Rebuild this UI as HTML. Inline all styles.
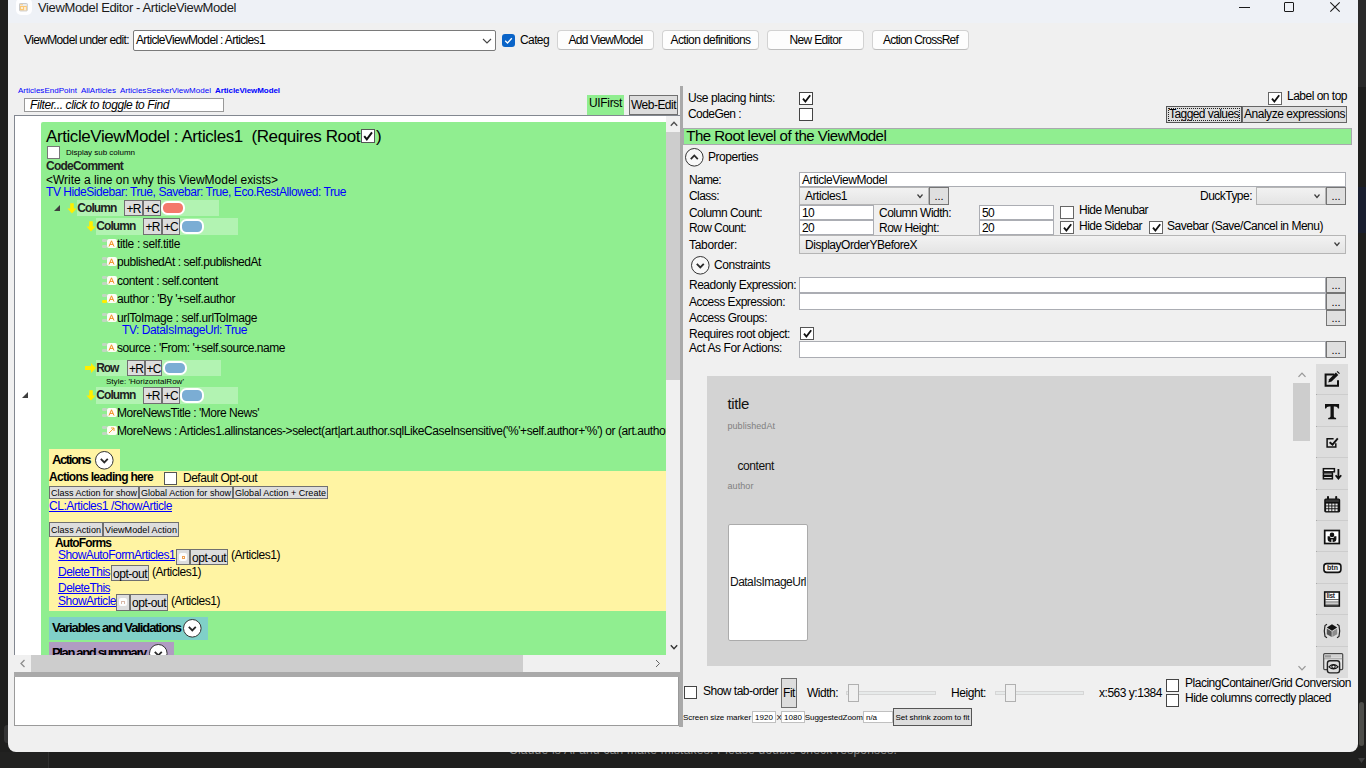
<!DOCTYPE html>
<html><head><meta charset="utf-8"><title>ViewModel Editor - ArticleViewModel</title>
<style>
html,body{margin:0;padding:0;width:1366px;height:768px;overflow:hidden;background:#1c1c1c;font-family:"Liberation Sans",sans-serif;}
.b{position:absolute;box-sizing:border-box;}
.t{position:absolute;white-space:pre;}
svg{position:absolute;overflow:visible;}
</style></head><body>
<div class="b" style="left:0px;top:0px;width:1366px;height:768px;background:#1f1f1e;"></div>
<span class="t" style="left:509px;top:740.0px;line-height:20px;color:#8a8a8a;font-size:12px;letter-spacing:0.219px;">Claude is AI and can make mistakes. Please double-check responses.</span>
<div class="b" style="left:1358px;top:0px;width:8px;height:87px;background:#2a2a2a;"></div>
<div class="b" style="left:1358px;top:187px;width:8px;height:46px;background:#1a1f30;"></div>
<div class="b" style="left:1358.7px;top:702px;width:5.2px;height:44px;background:#4e4e4a;border-radius:3px;"></div>
<svg style="left:1358px;top:758px" width="7" height="5" viewBox="0 0 7 5"><path d="M0 0 H7 L3.5 5 Z" fill="#3e3e3e"/></svg>
<div class="b" style="left:0px;top:752px;width:48px;height:16px;background:#222221;"></div>
<div class="b" style="left:48px;top:752px;width:1px;height:16px;background:#303030;"></div>
<div class="b" style="left:4px;top:725px;width:7px;height:18px;background:#353535;border-radius:3.5px;"></div>
<div class="b" style="left:8px;top:-10px;width:1350px;height:761.5px;background:#f0f0f0;border-radius:8px;"></div>
<div class="b" style="left:8px;top:0px;width:1350px;height:23px;background:#eef1f6;"></div>
<div class="b" style="left:15.8px;top:-2px;width:16px;height:17px;background:#fefeff;border-radius:5px;"></div>
<svg style="left:19.4px;top:2.6px" width="8.8" height="8.4" viewBox="0 0 8.8 8.4"><rect x="0.5" y="0.5" width="7.8" height="7.4" rx="0.6" fill="#ececec" stroke="#c9c9c9" stroke-width="1"/><rect x="1" y="1" width="3" height="1.2" fill="#fbd59a"/><rect x="1" y="3" width="6.8" height="4.3" fill="#fbc774"/><circle cx="3" cy="5" r="0.9" fill="#fff"/><rect x="5.2" y="4" width="1.6" height="3.2" fill="#fff" opacity="0.8"/></svg>
<span class="t" style="left:38px;top:-2.5px;line-height:20px;color:#1a1a1a;font-size:13px;letter-spacing:-0.378px;">ViewModel Editor - ArticleViewModel</span>
<div class="b" style="left:1239px;top:7px;width:11px;height:1px;background:#1a1a1a;"></div>
<div class="b" style="left:1284px;top:2px;width:10px;height:10px;border:1px solid #1a1a1a;border-radius:1px;"></div>
<svg style="left:1330px;top:2px" width="10" height="10" viewBox="0 0 10 10"><path d="M0.3 0.3 L9.7 9.7 M9.7 0.3 L0.3 9.7" stroke="#1a1a1a" stroke-width="1.1"/></svg>
<span class="t" style="left:24px;top:30.0px;line-height:20px;color:#000;font-size:12px;letter-spacing:-0.644px;">ViewModel under edit:</span>
<div class="b" style="left:133px;top:30px;width:363px;height:21px;background:#fff;border:1px solid #7a7a7a;border-radius:2px;"></div>
<span class="t" style="left:136px;top:30.0px;line-height:20px;color:#000;font-size:12px;letter-spacing:-0.649px;">ArticleViewModel : Articles1</span>
<svg style="left:479px;top:33px" width="16" height="16" viewBox="-8 -8 16 16"><path d="M-4.0 -2.0 L0 2.0 L4.0 -2.0" fill="none" stroke="#444" stroke-width="1.1"/></svg>
<div class="b" style="left:502px;top:34px;width:13px;height:13px;background:#0a64c8;border-radius:3px;"></div>
<svg style="left:502px;top:34px" width="13" height="13" viewBox="0 0 13 13"><path d="M3.2 6.8 L5.5 9 L9.8 4.2" fill="none" stroke="#fff" stroke-width="1.3"/></svg>
<span class="t" style="left:520px;top:30.0px;line-height:20px;color:#000;font-size:12px;letter-spacing:-0.606px;">Categ</span>
<div class="b" style="left:557px;top:30px;width:97px;height:20px;background:#fdfdfd;border:1px solid #d2d2d2;border-radius:4px;border-bottom-color:#bdbdbd;"></div>
<span class="t" style="left:568.5px;top:30.0px;line-height:20px;color:#000;font-size:12px;letter-spacing:-0.706px;">Add ViewModel</span>
<div class="b" style="left:662px;top:30px;width:97px;height:20px;background:#fdfdfd;border:1px solid #d2d2d2;border-radius:4px;border-bottom-color:#bdbdbd;"></div>
<span class="t" style="left:670.5px;top:30.0px;line-height:20px;color:#000;font-size:12px;letter-spacing:-0.596px;">Action definitions</span>
<div class="b" style="left:767px;top:30px;width:97px;height:20px;background:#fdfdfd;border:1px solid #d2d2d2;border-radius:4px;border-bottom-color:#bdbdbd;"></div>
<span class="t" style="left:789.5px;top:30.0px;line-height:20px;color:#000;font-size:12px;letter-spacing:-0.669px;">New Editor</span>
<div class="b" style="left:872px;top:30px;width:97px;height:20px;background:#fdfdfd;border:1px solid #d2d2d2;border-radius:4px;border-bottom-color:#bdbdbd;"></div>
<span class="t" style="left:883.0px;top:30.0px;line-height:20px;color:#000;font-size:12px;letter-spacing:-0.780px;">Action CrossRef</span>
<span class="t" style="left:18px;top:80.7px;line-height:20px;color:#0000ff;font-size:8px;letter-spacing:0.019px;">ArticlesEndPoint</span>
<span class="t" style="left:81px;top:80.7px;line-height:20px;color:#0000ff;font-size:8px;letter-spacing:-0.011px;">AllArticles</span>
<span class="t" style="left:120px;top:80.7px;line-height:20px;color:#0000ff;font-size:8px;letter-spacing:0.019px;">ArticlesSeekerViewModel</span>
<span class="t" style="left:215px;top:80.7px;line-height:20px;color:#0000ff;font-size:8px;font-weight:bold;letter-spacing:-0.068px;">ArticleViewModel</span>
<div class="b" style="left:24px;top:98px;width:200px;height:14px;background:#fff;border:1px solid #999;"></div>
<span class="t" style="left:30px;top:95.3px;line-height:20px;color:#000;font-size:12px;font-style:italic;letter-spacing:-0.402px;">Filter... click to toggle to Find</span>
<div class="b" style="left:587px;top:95px;width:37px;height:20px;background:#90ee90;"></div>
<span class="t" style="left:589px;top:93.0px;line-height:20px;color:#000;font-size:12px;letter-spacing:-0.333px;">UIFirst</span>
<div class="b" style="left:629px;top:95px;width:49px;height:20px;background:#dddddd;border:1px solid #707070;"></div>
<span class="t" style="left:631px;top:95.0px;line-height:20px;color:#000;font-size:12px;letter-spacing:-0.518px;">Web-Edit</span>
<div class="b" style="left:14px;top:115px;width:666px;height:558px;background:#fff;border:1px solid #828790;"></div>
<div class="b" style="left:41px;top:122px;width:625px;height:533px;background:#90ee90;border-radius:2px 0 0 0;"></div>
<div class="b" style="left:666px;top:116px;width:14px;height:540px;background:#f0f0f0;"></div>
<div class="b" style="left:666px;top:132px;width:14px;height:248px;background:#cdcdcd;"></div>
<svg style="left:666.3px;top:116px" width="16" height="16" viewBox="-8 -8 16 16"><path d="M-3.2 1.7 L0 -1.7 L3.2 1.7" fill="none" stroke="#505050" stroke-width="1.4"/></svg>
<svg style="left:666.3px;top:639px" width="16" height="16" viewBox="-8 -8 16 16"><path d="M-3.2 -1.7 L0 1.7 L3.2 -1.7" fill="none" stroke="#333" stroke-width="1.4"/></svg>
<div class="b" style="left:14px;top:655px;width:666px;height:17px;background:#f0f0f0;"></div>
<div class="b" style="left:31px;top:655px;width:492px;height:17px;background:#cdcdcd;"></div>
<svg style="left:15px;top:655px" width="16" height="17" viewBox="0 0 16 17"><path d="M9.5 5 L6 8.5 L9.5 12" fill="none" stroke="#8c8c8c" stroke-width="1.3"/></svg>
<svg style="left:650px;top:655px" width="16" height="17" viewBox="0 0 16 17"><path d="M6 5 L9.5 8.5 L6 12" fill="none" stroke="#666" stroke-width="1"/></svg>
<div class="b" style="left:14px;top:672px;width:669px;height:5px;background:#a9a9a9;"></div>
<div class="b" style="left:14px;top:677px;width:665px;height:49px;background:#fff;border:1px solid #9a9a9a;border-top:none;"></div>
<div class="b" style="left:679px;top:672px;width:4px;height:55px;background:#a9a9a9;"></div>
<div class="b" style="left:680px;top:86px;width:3px;height:641px;background:#a9a9a9;"></div>
<svg style="left:21px;top:391px" width="8" height="8" viewBox="0 0 8 8"><path d="M7 1 L7 7 L1 7 Z" fill="#3e3e3e"/></svg>
<div class="b" style="left:0;top:0;width:666px;height:655px;overflow:hidden">
<span class="t" style="left:46px;top:127.0px;line-height:20px;color:#000;font-size:17px;letter-spacing:-0.415px;">ArticleViewModel : Articles1  (Requires Root</span>
<div class="b" style="left:361px;top:129px;width:14px;height:14px;background:#fff;border:1px solid #555;"></div>
<svg style="left:361.0px;top:129px" width="14" height="14" viewBox="0 0 13 13"><path d="M3 6.6 L5.4 9.6 L10.2 3.2" fill="none" stroke="#111" stroke-width="1.8"/></svg>
<span class="t" style="left:376px;top:127.0px;line-height:20px;color:#000;font-size:17px;">)</span>
<div class="b" style="left:47px;top:146px;width:13px;height:13px;background:#fff;border:1px solid #777;"></div>
<span class="t" style="left:66px;top:142.5px;line-height:20px;color:#000;font-size:8px;letter-spacing:-0.021px;">Display sub column</span>
<span class="t" style="left:46px;top:156.0px;line-height:20px;color:#222;font-size:12px;font-weight:bold;letter-spacing:-0.759px;">CodeComment</span>
<span class="t" style="left:46px;top:170.0px;line-height:20px;color:#000;font-size:12px;letter-spacing:-0.023px;">&lt;Write a line on why this ViewModel exists&gt;</span>
<span class="t" style="left:46px;top:182.0px;line-height:20px;color:#0000ff;font-size:12px;letter-spacing:-0.440px;">TV HideSidebar: True, Savebar: True, Eco.RestAllowed: True</span>
<svg style="left:53px;top:204px" width="8" height="8" viewBox="0 0 8 8"><path d="M7 1 L7 7 L1 7 Z" fill="#3e3e3e"/></svg>
<div class="b" style="left:77px;top:200px;width:142px;height:16px;background:#b2f3b2;"></div>
<svg style="left:67px;top:202px" width="10" height="12" viewBox="0 0 10 12"><path d="M3.2 1.2 H6.8 V6.4 H9.6 L5 11.4 L0.4 6.4 H3.2 Z" fill="#ffee00"/></svg>
<span class="t" style="left:77.3px;top:198.0px;line-height:20px;color:#222;font-size:12px;font-weight:bold;letter-spacing:-0.945px;">Column</span>
<div class="b" style="left:124px;top:200px;width:19px;height:16px;background:#dddddd;border:1px solid #707070;"></div>
<span class="t" style="left:126.5px;top:198.5px;line-height:20px;color:#000;font-size:12px;letter-spacing:-0.844px;">+R</span>
<div class="b" style="left:142.5px;top:200px;width:18.5px;height:16px;background:#dddddd;border:1px solid #707070;"></div>
<span class="t" style="left:144.75px;top:198.5px;line-height:20px;color:#000;font-size:12px;letter-spacing:-0.844px;">+C</span>
<div class="b" style="left:161.2px;top:200.7px;width:24px;height:14.6px;background:#f4786c;border:2px solid #fff;border-radius:6.5px;"></div>
<div class="b" style="left:96px;top:218px;width:142px;height:17px;background:#b2f3b2;"></div>
<svg style="left:86px;top:220px" width="10" height="12" viewBox="0 0 10 12"><path d="M3.2 1.2 H6.8 V6.4 H9.6 L5 11.4 L0.4 6.4 H3.2 Z" fill="#ffee00"/></svg>
<span class="t" style="left:96.3px;top:216.0px;line-height:20px;color:#222;font-size:12px;font-weight:bold;letter-spacing:-0.945px;">Column</span>
<div class="b" style="left:143px;top:218px;width:19px;height:17px;background:#dddddd;border:1px solid #707070;"></div>
<span class="t" style="left:145.5px;top:217.0px;line-height:20px;color:#000;font-size:12px;letter-spacing:-0.844px;">+R</span>
<div class="b" style="left:161.5px;top:218px;width:18.5px;height:17px;background:#dddddd;border:1px solid #707070;"></div>
<span class="t" style="left:163.75px;top:217.0px;line-height:20px;color:#000;font-size:12px;letter-spacing:-0.844px;">+C</span>
<div class="b" style="left:180.2px;top:219.2px;width:24px;height:14.6px;background:#7badd4;border:2px solid #fff;border-radius:6.5px;"></div>
<div class="b" style="left:102px;top:239.2px;width:5px;height:2.6px;background:#c2d6c2;border-radius:1.3px;"></div>
<div class="b" style="left:102px;top:245px;width:5px;height:2.6px;background:#c2d6c2;border-radius:1.3px;"></div>
<div class="b" style="left:107px;top:238.6px;width:9.5px;height:9.4px;background:#fdfdf5;border-radius:2px;"></div>
<svg style="left:108px;top:239.6px" width="7" height="7" viewBox="0 0 7 7"><path d="M1 6.5 L3.5 0.8 L6 6.5 M2 4.4 H5" fill="none" stroke="#f09020" stroke-width="1"/></svg>
<span class="t" style="left:117px;top:234.0px;line-height:20px;color:#000;font-size:12px;letter-spacing:-0.353px;">title : self.title</span>
<div class="b" style="left:102px;top:257.2px;width:5px;height:2.6px;background:#c2d6c2;border-radius:1.3px;"></div>
<div class="b" style="left:102px;top:263px;width:5px;height:2.6px;background:#c2d6c2;border-radius:1.3px;"></div>
<div class="b" style="left:107px;top:256.6px;width:9.5px;height:9.4px;background:#fdfdf5;border-radius:2px;"></div>
<svg style="left:108px;top:257.6px" width="7" height="7" viewBox="0 0 7 7"><path d="M1 6.5 L3.5 0.8 L6 6.5 M2 4.4 H5" fill="none" stroke="#f09020" stroke-width="1"/></svg>
<span class="t" style="left:117px;top:252.0px;line-height:20px;color:#000;font-size:12px;letter-spacing:-0.448px;">publishedAt : self.publishedAt</span>
<div class="b" style="left:102px;top:276.2px;width:5px;height:2.6px;background:#c2d6c2;border-radius:1.3px;"></div>
<div class="b" style="left:102px;top:282px;width:5px;height:2.6px;background:#c2d6c2;border-radius:1.3px;"></div>
<div class="b" style="left:107px;top:275.6px;width:9.5px;height:9.4px;background:#fdfdf5;border-radius:2px;"></div>
<svg style="left:108px;top:276.6px" width="7" height="7" viewBox="0 0 7 7"><path d="M1 6.5 L3.5 0.8 L6 6.5 M2 4.4 H5" fill="none" stroke="#f09020" stroke-width="1"/></svg>
<span class="t" style="left:117px;top:271.0px;line-height:20px;color:#000;font-size:12px;letter-spacing:-0.443px;">content : self.content</span>
<div class="b" style="left:102px;top:294.2px;width:5px;height:2.6px;background:#c2d6c2;border-radius:1.3px;"></div>
<div class="b" style="left:102px;top:300px;width:5px;height:2.6px;background:#ffee00;border-radius:1.3px;"></div>
<div class="b" style="left:107px;top:293.6px;width:9.5px;height:9.4px;background:#fdfdf5;border-radius:2px;"></div>
<svg style="left:108px;top:294.6px" width="7" height="7" viewBox="0 0 7 7"><path d="M1 6.5 L3.5 0.8 L6 6.5 M2 4.4 H5" fill="none" stroke="#f09020" stroke-width="1"/></svg>
<span class="t" style="left:117px;top:289.0px;line-height:20px;color:#000;font-size:12px;letter-spacing:-0.423px;">author : &#x27;By &#x27;+self.author</span>
<div class="b" style="left:102px;top:313.2px;width:5px;height:2.6px;background:#c2d6c2;border-radius:1.3px;"></div>
<div class="b" style="left:102px;top:319px;width:5px;height:2.6px;background:#c2d6c2;border-radius:1.3px;"></div>
<div class="b" style="left:107px;top:312.6px;width:9.5px;height:9.4px;background:#fdfdf5;border-radius:2px;"></div>
<svg style="left:108px;top:313.6px" width="7" height="7" viewBox="0 0 7 7"><path d="M1 6.5 L3.5 0.8 L6 6.5 M2 4.4 H5" fill="none" stroke="#f09020" stroke-width="1"/></svg>
<span class="t" style="left:117px;top:308.0px;line-height:20px;color:#000;font-size:12px;letter-spacing:-0.383px;">urlToImage : self.urlToImage</span>
<span class="t" style="left:122px;top:320.0px;line-height:20px;color:#0000ff;font-size:12px;letter-spacing:-0.442px;">TV: DataIsImageUrl: True</span>
<div class="b" style="left:102px;top:343.2px;width:5px;height:2.6px;background:#c2d6c2;border-radius:1.3px;"></div>
<div class="b" style="left:102px;top:349px;width:5px;height:2.6px;background:#c2d6c2;border-radius:1.3px;"></div>
<div class="b" style="left:107px;top:342.6px;width:9.5px;height:9.4px;background:#fdfdf5;border-radius:2px;"></div>
<svg style="left:108px;top:343.6px" width="7" height="7" viewBox="0 0 7 7"><path d="M1 6.5 L3.5 0.8 L6 6.5 M2 4.4 H5" fill="none" stroke="#f09020" stroke-width="1"/></svg>
<span class="t" style="left:117px;top:338.0px;line-height:20px;color:#000;font-size:12px;letter-spacing:-0.460px;">source : &#x27;From: &#x27;+self.source.name</span>
<div class="b" style="left:96px;top:360px;width:125px;height:16px;background:#b2f3b2;"></div>
<svg style="left:85px;top:363px" width="11" height="10" viewBox="0 0 11 10"><path d="M0 3 H6 V0 L11 5 L6 10 V7 H0 Z" fill="#ffee00"/></svg>
<span class="t" style="left:96.3px;top:358.0px;line-height:20px;color:#222;font-size:12px;font-weight:bold;letter-spacing:-1.115px;">Row</span>
<div class="b" style="left:127px;top:360px;width:18.2px;height:16px;background:#dddddd;border:1px solid #707070;"></div>
<span class="t" style="left:129.1px;top:358.5px;line-height:20px;color:#000;font-size:12px;letter-spacing:-0.844px;">+R</span>
<div class="b" style="left:144.7px;top:360px;width:17.7px;height:16px;background:#dddddd;border:1px solid #707070;"></div>
<span class="t" style="left:146.54999999999998px;top:358.5px;line-height:20px;color:#000;font-size:12px;letter-spacing:-0.844px;">+C</span>
<div class="b" style="left:162.6px;top:360.7px;width:24px;height:14.6px;background:#7badd4;border:2px solid #fff;border-radius:6.5px;"></div>
<span class="t" style="left:106px;top:371.5px;line-height:20px;color:#000;font-size:8px;letter-spacing:0.031px;">Style: &#x27;HorizontalRow&#x27;</span>
<div class="b" style="left:96px;top:387px;width:142px;height:17px;background:#b2f3b2;"></div>
<svg style="left:86px;top:389px" width="10" height="12" viewBox="0 0 10 12"><path d="M3.2 1.2 H6.8 V6.4 H9.6 L5 11.4 L0.4 6.4 H3.2 Z" fill="#ffee00"/></svg>
<span class="t" style="left:96.3px;top:385.0px;line-height:20px;color:#222;font-size:12px;font-weight:bold;letter-spacing:-0.945px;">Column</span>
<div class="b" style="left:143px;top:387px;width:19px;height:17px;background:#dddddd;border:1px solid #707070;"></div>
<span class="t" style="left:145.5px;top:386.0px;line-height:20px;color:#000;font-size:12px;letter-spacing:-0.844px;">+R</span>
<div class="b" style="left:161.5px;top:387px;width:18.5px;height:17px;background:#dddddd;border:1px solid #707070;"></div>
<span class="t" style="left:163.75px;top:386.0px;line-height:20px;color:#000;font-size:12px;letter-spacing:-0.844px;">+C</span>
<div class="b" style="left:180.2px;top:388.2px;width:24px;height:14.6px;background:#7badd4;border:2px solid #fff;border-radius:6.5px;"></div>
<div class="b" style="left:102px;top:408.2px;width:5px;height:2.6px;background:#c2d6c2;border-radius:1.3px;"></div>
<div class="b" style="left:102px;top:414px;width:5px;height:2.6px;background:#c2d6c2;border-radius:1.3px;"></div>
<div class="b" style="left:107px;top:407.6px;width:9.5px;height:9.4px;background:#fdfdf5;border-radius:2px;"></div>
<svg style="left:108px;top:408.6px" width="7" height="7" viewBox="0 0 7 7"><path d="M1 6.5 L3.5 0.8 L6 6.5 M2 4.4 H5" fill="none" stroke="#f09020" stroke-width="1"/></svg>
<span class="t" style="left:117px;top:403.0px;line-height:20px;color:#000;font-size:12px;letter-spacing:-0.476px;">MoreNewsTitle : &#x27;More News&#x27;</span>
<div class="b" style="left:102px;top:426.2px;width:5px;height:2.6px;background:#c2d6c2;border-radius:1.3px;"></div>
<div class="b" style="left:102px;top:432px;width:5px;height:2.6px;background:#c2d6c2;border-radius:1.3px;"></div>
<div class="b" style="left:107px;top:425.6px;width:9.5px;height:9.4px;background:#fdfdf5;border-radius:2px;"></div>
<svg style="left:108px;top:426.6px" width="7" height="7" viewBox="0 0 7 7"><path d="M1 6 L6 1 M3 1 H6 V4" fill="none" stroke="#f0a030" stroke-width="1"/></svg>
<span class="t" style="left:117px;top:421.0px;line-height:20px;color:#000;font-size:12px;letter-spacing:-0.415px;">MoreNews : Articles1.allinstances-&gt;select(art|art.author.sqlLikeCaseInsensitive(&#x27;%&#x27;+self.author+&#x27;%&#x27;) or (art.author.sqlLike</span>
<div class="b" style="left:49px;top:449px;width:71px;height:23px;background:#fff4a3;"></div>
<span class="t" style="left:52px;top:450.0px;line-height:20px;color:#000;font-size:13px;font-weight:bold;letter-spacing:-1.382px;">Actions</span>
<svg style="left:94.3px;top:450.09999999999997px" width="20.6" height="20.6" viewBox="-10.3 -10.3 20.6 20.6"><circle r="8.8" fill="#fff" stroke="#333" stroke-width="1"/><path d="M-3.5 -1.5 L0 2.1 L3.5 -1.5" fill="none" stroke="#2a2a2a" stroke-width="1.8"/></svg>
<div class="b" style="left:49px;top:471px;width:617px;height:140px;background:#fff4a3;"></div>
<span class="t" style="left:49px;top:467.0px;line-height:20px;color:#000;font-size:12px;font-weight:bold;letter-spacing:-0.702px;">Actions leading here</span>
<div class="b" style="left:164px;top:472px;width:13px;height:13px;background:#fff;border:1px solid #555;"></div>
<span class="t" style="left:183px;top:468.0px;line-height:20px;color:#000;font-size:12px;letter-spacing:-0.492px;">Default Opt-out</span>
<div class="b" style="left:49px;top:486px;width:90px;height:13px;background:#dddddd;border:1px solid #707070;"></div>
<span class="t" style="left:51.0px;top:482.5px;line-height:20px;color:#000;font-size:9px;letter-spacing:-0.002px;">Class Action for show</span>
<div class="b" style="left:139px;top:486px;width:94px;height:13px;background:#dddddd;border:1px solid #707070;"></div>
<span class="t" style="left:141.0px;top:482.5px;line-height:20px;color:#000;font-size:9px;letter-spacing:0.020px;">Global Action for show</span>
<div class="b" style="left:233px;top:486px;width:95px;height:13px;background:#dddddd;border:1px solid #707070;"></div>
<span class="t" style="left:235.0px;top:482.5px;line-height:20px;color:#000;font-size:9px;letter-spacing:0.031px;">Global Action + Create</span>
<span class="t" style="left:49px;top:496.0px;line-height:20px;color:#0000ff;font-size:12px;letter-spacing:-0.469px;text-decoration:underline;">CL:Articles1 /ShowArticle</span>
<div class="b" style="left:49px;top:522px;width:54px;height:15px;background:#dddddd;border:1px solid #707070;"></div>
<span class="t" style="left:51.0px;top:519.5px;line-height:20px;color:#000;font-size:9px;letter-spacing:0.039px;">Class Action</span>
<div class="b" style="left:103px;top:522px;width:76px;height:15px;background:#dddddd;border:1px solid #707070;"></div>
<span class="t" style="left:105.0px;top:519.5px;line-height:20px;color:#000;font-size:9px;letter-spacing:0.070px;">ViewModel Action</span>
<span class="t" style="left:55px;top:533.0px;line-height:20px;color:#000;font-size:12px;font-weight:bold;letter-spacing:-0.889px;">AutoForms</span>
<span class="t" style="left:58px;top:545.0px;line-height:20px;color:#0000ff;font-size:12px;letter-spacing:-0.558px;text-decoration:underline;">ShowAutoFormArticles1</span>
<div class="b" style="left:176px;top:549px;width:14px;height:16px;background:#dddddd;border:1px solid #707070;"></div>
<div class="b" style="left:179px;top:553px;width:8px;height:8px;background:#fdfdfd;border-radius:2px;"></div>
<div class="b" style="left:181.5px;top:555.5px;width:3.5px;height:3.5px;border:1px solid #f0a050;"></div>
<div class="b" style="left:190px;top:549px;width:38px;height:16px;background:#dddddd;border:1px solid #707070;"></div>
<span class="t" style="left:192.0px;top:547.5px;line-height:20px;color:#000;font-size:12px;letter-spacing:-0.480px;">opt-out</span>
<span class="t" style="left:231px;top:545.0px;line-height:20px;color:#000;font-size:12px;letter-spacing:-0.456px;">(Articles1)</span>
<span class="t" style="left:58px;top:562.0px;line-height:20px;color:#0000ff;font-size:12px;letter-spacing:-0.536px;text-decoration:underline;">DeleteThis</span>
<div class="b" style="left:111px;top:565px;width:38px;height:16px;background:#dddddd;border:1px solid #707070;"></div>
<span class="t" style="left:113.0px;top:563.5px;line-height:20px;color:#000;font-size:12px;letter-spacing:-0.480px;">opt-out</span>
<span class="t" style="left:152px;top:562.0px;line-height:20px;color:#000;font-size:12px;letter-spacing:-0.456px;">(Articles1)</span>
<span class="t" style="left:58px;top:578.0px;line-height:20px;color:#0000ff;font-size:12px;letter-spacing:-0.536px;text-decoration:underline;">DeleteThis</span>
<span class="t" style="left:58px;top:591.0px;line-height:20px;color:#0000ff;font-size:12px;letter-spacing:-0.487px;text-decoration:underline;">ShowArticle</span>
<div class="b" style="left:116px;top:594px;width:14px;height:17px;background:#dddddd;border:1px solid #707070;"></div>
<div class="b" style="left:119px;top:598px;width:8px;height:8px;background:#fdfdfd;border-radius:2px;"></div>
<div class="b" style="left:121px;top:600.5px;width:4px;height:3px;border:1px solid #d8b8a8;border-bottom:none;"></div>
<div class="b" style="left:130px;top:594px;width:38px;height:17px;background:#dddddd;border:1px solid #707070;"></div>
<span class="t" style="left:132.0px;top:593.0px;line-height:20px;color:#000;font-size:12px;letter-spacing:-0.480px;">opt-out</span>
<span class="t" style="left:171px;top:591.0px;line-height:20px;color:#000;font-size:12px;letter-spacing:-0.456px;">(Articles1)</span>
<div class="b" style="left:49px;top:617px;width:159px;height:23px;background:#80d0c8;"></div>
<span class="t" style="left:52px;top:618.0px;line-height:20px;color:#000;font-size:13px;font-weight:bold;letter-spacing:-1.083px;">Variables and Validations</span>
<svg style="left:182.29999999999998px;top:618.1px" width="20.6" height="20.6" viewBox="-10.3 -10.3 20.6 20.6"><circle r="8.8" fill="#fff" stroke="#333" stroke-width="1"/><path d="M-3.5 -1.5 L0 2.1 L3.5 -1.5" fill="none" stroke="#2a2a2a" stroke-width="1.8"/></svg>
<div class="b" style="left:49px;top:642px;width:125px;height:20px;background:#b09cc2;"></div>
<span class="t" style="left:52px;top:643.0px;line-height:20px;color:#000;font-size:13px;font-weight:bold;letter-spacing:-1.351px;">Plan and summary</span>
<svg style="left:148.29999999999998px;top:643.1px" width="20.6" height="20.6" viewBox="-10.3 -10.3 20.6 20.6"><circle r="8.8" fill="#fff" stroke="#333" stroke-width="1"/><path d="M-3.5 -1.5 L0 2.1 L3.5 -1.5" fill="none" stroke="#2a2a2a" stroke-width="1.8"/></svg>
</div>
<span class="t" style="left:688px;top:88.0px;line-height:20px;color:#000;font-size:12px;letter-spacing:-0.429px;">Use placing hints:</span>
<div class="b" style="left:799px;top:92px;width:14px;height:13px;background:#fff;border:1px solid #444;"></div>
<svg style="left:799.5px;top:92px" width="13" height="13" viewBox="0 0 13 13"><path d="M3 6.6 L5.4 9.6 L10.2 3.2" fill="none" stroke="#111" stroke-width="1.8"/></svg>
<span class="t" style="left:688px;top:104.0px;line-height:20px;color:#000;font-size:12px;letter-spacing:-0.561px;">CodeGen :</span>
<div class="b" style="left:799px;top:108px;width:14px;height:13px;background:#fff;border:1px solid #444;"></div>
<div class="b" style="left:1268px;top:92px;width:14px;height:13px;background:#fff;border:1px solid #666;"></div>
<svg style="left:1268.5px;top:92px" width="13" height="13" viewBox="0 0 13 13"><path d="M3 6.6 L5.4 9.6 L10.2 3.2" fill="none" stroke="#111" stroke-width="1.8"/></svg>
<span class="t" style="left:1287px;top:86.0px;line-height:20px;color:#000;font-size:12px;letter-spacing:-0.505px;">Label on top</span>
<div class="b" style="left:1166px;top:106px;width:76px;height:17px;background:#dddddd;border:1px solid #555;"></div>
<span class="t" style="left:1169.0px;top:103.8px;line-height:20px;color:#000;font-size:12px;letter-spacing:-0.569px;">Tagged values</span>
<div class="b" style="left:1168px;top:108px;width:72px;height:13px;border:1px dotted #222;"></div>
<div class="b" style="left:1242px;top:106px;width:105px;height:17px;background:#dddddd;border:1px solid #666;"></div>
<span class="t" style="left:1244.0px;top:103.8px;line-height:20px;color:#000;font-size:12px;letter-spacing:-0.477px;">Analyze expressions</span>
<div class="b" style="left:683px;top:128px;width:669px;height:17px;background:#90ee90;border:1px solid #a9a9ae;"></div>
<span class="t" style="left:686.3px;top:126.3px;line-height:20px;color:#000;font-size:15px;letter-spacing:-0.506px;">The Root level of the ViewModel</span>
<svg style="left:684.3000000000001px;top:147.1px" width="20.6" height="20.6" viewBox="-10.3 -10.3 20.6 20.6"><circle r="8.8" fill="#f8f8f8" stroke="#333" stroke-width="1"/><path d="M-3.5 1.8 L0 -1.8 L3.5 1.8" fill="none" stroke="#2a2a2a" stroke-width="1.8"/></svg>
<span class="t" style="left:708px;top:147.0px;line-height:20px;color:#000;font-size:12px;letter-spacing:-0.470px;">Properties</span>
<span class="t" style="left:689px;top:170.0px;line-height:20px;color:#000;font-size:12px;letter-spacing:-0.669px;">Name:</span>
<div class="b" style="left:799px;top:172px;width:547px;height:15px;background:#fff;border:1px solid #abadb3;"></div>
<span class="t" style="left:802px;top:169.8px;line-height:20px;color:#000;font-size:12px;letter-spacing:-0.427px;">ArticleViewModel</span>
<span class="t" style="left:689px;top:186.0px;line-height:20px;color:#000;font-size:12px;letter-spacing:-0.557px;">Class:</span>
<div class="b" style="left:799px;top:187px;width:130px;height:18px;background:linear-gradient(#f2f2f2,#e4e4e4);border:1px solid #b5b5b5;"></div>
<span class="t" style="left:805px;top:186.0px;line-height:20px;color:#000;font-size:12px;letter-spacing:-0.446px;">Articles1</span>
<svg style="left:911.5px;top:187.5px" width="16" height="16" viewBox="-8 -8 16 16"><path d="M-2.5 -1.5 L0 1.5 L2.5 -1.5" fill="none" stroke="#3c3c3c" stroke-width="1.2"/></svg>
<div class="b" style="left:929px;top:187px;width:20px;height:18px;background:#dfdfdf;border:1px solid #757575;"></div>
<span class="t" style="left:934.5px;top:186.2px;line-height:20px;color:#000;font-size:11px;letter-spacing:-0.057px;">...</span>
<span class="t" style="left:1200px;top:186.0px;line-height:20px;color:#000;font-size:12px;letter-spacing:-0.523px;">DuckType:</span>
<div class="b" style="left:1256px;top:187px;width:70px;height:18px;background:linear-gradient(#f2f2f2,#e4e4e4);border:1px solid #b5b5b5;"></div>
<svg style="left:1308.5px;top:187.5px" width="16" height="16" viewBox="-8 -8 16 16"><path d="M-2.5 -1.5 L0 1.5 L2.5 -1.5" fill="none" stroke="#3c3c3c" stroke-width="1.2"/></svg>
<div class="b" style="left:1326px;top:187px;width:20px;height:18px;background:#dfdfdf;border:1px solid #757575;"></div>
<span class="t" style="left:1331.5px;top:186.2px;line-height:20px;color:#000;font-size:11px;letter-spacing:-0.057px;">...</span>
<span class="t" style="left:689px;top:203.0px;line-height:20px;color:#000;font-size:12px;letter-spacing:-0.542px;">Column Count:</span>
<div class="b" style="left:799px;top:205px;width:75px;height:15px;background:#fff;border:1px solid #abadb3;"></div>
<span class="t" style="left:802px;top:202.8px;line-height:20px;color:#000;font-size:12px;letter-spacing:-0.680px;">10</span>
<span class="t" style="left:879px;top:203.0px;line-height:20px;color:#000;font-size:12px;letter-spacing:-0.516px;">Column Width:</span>
<div class="b" style="left:979px;top:205px;width:75px;height:15px;background:#fff;border:1px solid #abadb3;"></div>
<span class="t" style="left:982px;top:202.8px;line-height:20px;color:#000;font-size:12px;letter-spacing:-0.680px;">50</span>
<div class="b" style="left:1060px;top:206px;width:14px;height:13px;background:#fff;border:1px solid #666;"></div>
<span class="t" style="left:1079px;top:200.0px;line-height:20px;color:#000;font-size:12px;letter-spacing:-0.531px;">Hide Menubar</span>
<span class="t" style="left:689px;top:218.0px;line-height:20px;color:#000;font-size:12px;letter-spacing:-0.570px;">Row Count:</span>
<div class="b" style="left:799px;top:220px;width:75px;height:15px;background:#fff;border:1px solid #abadb3;"></div>
<span class="t" style="left:802px;top:217.8px;line-height:20px;color:#000;font-size:12px;letter-spacing:-0.680px;">20</span>
<span class="t" style="left:879px;top:218.0px;line-height:20px;color:#000;font-size:12px;letter-spacing:-0.489px;">Row Height:</span>
<div class="b" style="left:979px;top:220px;width:75px;height:15px;background:#fff;border:1px solid #abadb3;"></div>
<span class="t" style="left:982px;top:217.8px;line-height:20px;color:#000;font-size:12px;letter-spacing:-0.680px;">20</span>
<div class="b" style="left:1060px;top:221px;width:14px;height:13px;background:#fff;border:1px solid #666;"></div>
<svg style="left:1060.5px;top:221px" width="13" height="13" viewBox="0 0 13 13"><path d="M3 6.6 L5.4 9.6 L10.2 3.2" fill="none" stroke="#111" stroke-width="1.8"/></svg>
<span class="t" style="left:1079px;top:216.0px;line-height:20px;color:#000;font-size:12px;letter-spacing:-0.531px;">Hide Sidebar</span>
<div class="b" style="left:1149px;top:221px;width:14px;height:13px;background:#fff;border:1px solid #666;"></div>
<svg style="left:1149.5px;top:221px" width="13" height="13" viewBox="0 0 13 13"><path d="M3 6.6 L5.4 9.6 L10.2 3.2" fill="none" stroke="#111" stroke-width="1.8"/></svg>
<span class="t" style="left:1167px;top:216.0px;line-height:20px;color:#000;font-size:12px;letter-spacing:-0.486px;">Savebar (Save/Cancel in Menu)</span>
<span class="t" style="left:689px;top:235.0px;line-height:20px;color:#000;font-size:12px;letter-spacing:-0.300px;">Taborder:</span>
<div class="b" style="left:799px;top:235px;width:547px;height:19px;background:linear-gradient(#f2f2f2,#e4e4e4);border:1px solid #b5b5b5;"></div>
<span class="t" style="left:805px;top:234.5px;line-height:20px;color:#000;font-size:12px;letter-spacing:-0.470px;">DisplayOrderYBeforeX</span>
<svg style="left:1328.5px;top:236.0px" width="16" height="16" viewBox="-8 -8 16 16"><path d="M-2.5 -1.5 L0 1.5 L2.5 -1.5" fill="none" stroke="#3c3c3c" stroke-width="1.2"/></svg>
<svg style="left:690.3000000000001px;top:255.09999999999997px" width="20.6" height="20.6" viewBox="-10.3 -10.3 20.6 20.6"><circle r="8.8" fill="#f8f8f8" stroke="#333" stroke-width="1"/><path d="M-3.5 -1.5 L0 2.1 L3.5 -1.5" fill="none" stroke="#2a2a2a" stroke-width="1.8"/></svg>
<span class="t" style="left:714px;top:255.0px;line-height:20px;color:#000;font-size:12px;letter-spacing:-0.428px;">Constraints</span>
<span class="t" style="left:689px;top:275.0px;line-height:20px;color:#000;font-size:12px;letter-spacing:-0.487px;">Readonly Expression:</span>
<div class="b" style="left:799px;top:277px;width:527px;height:16px;background:#fff;border:1px solid #abadb3;"></div>
<div class="b" style="left:1326px;top:277px;width:20px;height:16px;background:#dfdfdf;border:1px solid #757575;"></div>
<span class="t" style="left:1331.5px;top:275.2px;line-height:20px;color:#000;font-size:11px;letter-spacing:-0.057px;">...</span>
<span class="t" style="left:689px;top:291.5px;line-height:20px;color:#000;font-size:12px;letter-spacing:-0.484px;">Access Expression:</span>
<div class="b" style="left:799px;top:293px;width:527px;height:17px;background:#fff;border:1px solid #abadb3;"></div>
<div class="b" style="left:1326px;top:293px;width:20px;height:17px;background:#dfdfdf;border:1px solid #757575;"></div>
<span class="t" style="left:1331.5px;top:291.7px;line-height:20px;color:#000;font-size:11px;letter-spacing:-0.057px;">...</span>
<span class="t" style="left:689px;top:308.0px;line-height:20px;color:#000;font-size:12px;letter-spacing:-0.479px;">Access Groups:</span>
<div class="b" style="left:1326px;top:310px;width:20px;height:16px;background:#dfdfdf;border:1px solid #757575;"></div>
<span class="t" style="left:1331.5px;top:308.2px;line-height:20px;color:#000;font-size:11px;letter-spacing:-0.057px;">...</span>
<span class="t" style="left:689px;top:324.0px;line-height:20px;color:#000;font-size:12px;letter-spacing:-0.464px;">Requires root object:</span>
<div class="b" style="left:800px;top:327px;width:14px;height:13px;background:#fff;border:1px solid #555;"></div>
<svg style="left:800.5px;top:327px" width="13" height="13" viewBox="0 0 13 13"><path d="M3 6.6 L5.4 9.6 L10.2 3.2" fill="none" stroke="#111" stroke-width="1.8"/></svg>
<span class="t" style="left:689px;top:338.0px;line-height:20px;color:#000;font-size:12px;letter-spacing:-0.406px;">Act As For Actions:</span>
<div class="b" style="left:799px;top:341px;width:527px;height:17px;background:#fff;border:1px solid #abadb3;"></div>
<div class="b" style="left:1326px;top:341px;width:20px;height:17px;background:#dfdfdf;border:1px solid #757575;"></div>
<span class="t" style="left:1331.5px;top:339.7px;line-height:20px;color:#000;font-size:11px;letter-spacing:-0.057px;">...</span>
<div class="b" style="left:707px;top:376px;width:564px;height:290px;background:#d3d3d3;"></div>
<span class="t" style="left:727.5px;top:393.7px;line-height:20px;color:#111;font-size:15px;letter-spacing:-0.369px;">title</span>
<span class="t" style="left:727.5px;top:416.0px;line-height:20px;color:#808080;font-size:9px;letter-spacing:0.041px;">publishedAt</span>
<span class="t" style="left:737.5px;top:455.5px;line-height:20px;color:#111;font-size:12px;letter-spacing:-0.411px;">content</span>
<span class="t" style="left:727.5px;top:476.0px;line-height:20px;color:#808080;font-size:9px;letter-spacing:0.078px;">author</span>
<div class="b" style="left:727.5px;top:524px;width:80.5px;height:117px;background:#fff;border:1.6px solid #ababab;border-radius:2px;"></div>
<span class="t" style="left:730px;top:572.0px;line-height:20px;color:#111;font-size:12px;letter-spacing:-0.527px;">DataIsImageUrl</span>
<svg style="left:1293.5px;top:367.2px" width="16" height="16" viewBox="-8 -8 16 16"><path d="M-3.5 1.9 L0 -1.9 L3.5 1.9" fill="none" stroke="#999" stroke-width="1.3"/></svg>
<div class="b" style="left:1293px;top:383px;width:17px;height:58px;background:#cdcdcd;"></div>
<svg style="left:1293.5px;top:660px" width="16" height="16" viewBox="-8 -8 16 16"><path d="M-3.5 -1.9 L0 1.9 L3.5 -1.9" fill="none" stroke="#999" stroke-width="1.3"/></svg>
<div class="b" style="left:1316px;top:364px;width:31.5px;height:313.5px;background:#dddddd;"></div>
<div class="b" style="left:1316px;top:394px;width:31.5px;height:1px;background:#cdcdcd;"></div>
<div class="b" style="left:1316px;top:394px;width:1px;height:1px;background:#aaa;"></div>
<div class="b" style="left:1316px;top:426px;width:31.5px;height:1px;background:#cdcdcd;"></div>
<div class="b" style="left:1316px;top:426px;width:1px;height:1px;background:#aaa;"></div>
<div class="b" style="left:1316px;top:457px;width:31.5px;height:1px;background:#cdcdcd;"></div>
<div class="b" style="left:1316px;top:457px;width:1px;height:1px;background:#aaa;"></div>
<div class="b" style="left:1316px;top:489px;width:31.5px;height:1px;background:#cdcdcd;"></div>
<div class="b" style="left:1316px;top:489px;width:1px;height:1px;background:#aaa;"></div>
<div class="b" style="left:1316px;top:520px;width:31.5px;height:1px;background:#cdcdcd;"></div>
<div class="b" style="left:1316px;top:520px;width:1px;height:1px;background:#aaa;"></div>
<div class="b" style="left:1316px;top:551px;width:31.5px;height:1px;background:#cdcdcd;"></div>
<div class="b" style="left:1316px;top:551px;width:1px;height:1px;background:#aaa;"></div>
<div class="b" style="left:1316px;top:583px;width:31.5px;height:1px;background:#cdcdcd;"></div>
<div class="b" style="left:1316px;top:583px;width:1px;height:1px;background:#aaa;"></div>
<div class="b" style="left:1316px;top:614px;width:31.5px;height:1px;background:#cdcdcd;"></div>
<div class="b" style="left:1316px;top:614px;width:1px;height:1px;background:#aaa;"></div>
<div class="b" style="left:1316px;top:646px;width:31.5px;height:1px;background:#cdcdcd;"></div>
<div class="b" style="left:1316px;top:646px;width:1px;height:1px;background:#aaa;"></div>
<svg style="left:1322.0px;top:370.0px" width="20" height="20" viewBox="0 0 20 20"><path d="M12.2 4.6 H3.6 V15.8 H16 V10.2" fill="none" stroke="#111" stroke-width="2"/><path d="M6.2 12.6 L7.2 9.2 L13.9 2.5 L16.3 4.9 L9.6 11.6 Z" fill="#111"/><path d="M14.7 1.7 L15.5 0.9 L17.9 3.3 L17.1 4.1 Z" fill="#111"/></svg>
<svg style="left:1324.9px;top:403.7px" width="14.1" height="15.3" viewBox="0 0 14.1 15.3"><path d="M0 0 H14.1 V4.6 H13 Q12.6 2.5 10 2.5 H8.8 V12.5 Q8.8 13.7 11.1 14 V15.3 H3.2 V14 Q5.5 13.7 5.5 12.5 V2.5 H4.1 Q1.5 2.5 1.1 4.6 H0 Z" fill="#111"/></svg>
<svg style="left:1322.0px;top:433.0px" width="20" height="20" viewBox="0 0 20 20"><path d="M13.8 10.2 V13.9 H5.1 V5.8 H11.6" fill="none" stroke="#111" stroke-width="1.5"/><path d="M7.6 9.2 L10.5 11.6 L15.8 5.3" fill="none" stroke="#111" stroke-width="1.9"/></svg>
<svg style="left:1322.0px;top:464.0px" width="20" height="20" viewBox="0 0 20 20"><rect x="1.4" y="4.7" width="11" height="3.1" fill="#fff" stroke="#111" stroke-width="1.5"/><rect x="1.4" y="8.9" width="9" height="2.4" fill="#fff" stroke="#111" stroke-width="1.5"/><rect x="1.4" y="12.4" width="9" height="2.4" fill="#fff" stroke="#111" stroke-width="1.5"/><path d="M16.4 5 V14.4 M13.6 11.2 L16.4 14.6 L19.2 11.2" fill="none" stroke="#111" stroke-width="1.8"/></svg>
<svg style="left:1322.0px;top:495.3px" width="20" height="20" viewBox="0 0 20 20"><rect x="2.2" y="3.4" width="16" height="14" rx="1.6" fill="#111"/><rect x="5" y="1" width="2" height="4" rx="0.8" fill="#111"/><rect x="13.2" y="1" width="2" height="4" rx="0.8" fill="#111"/><rect x="3.6" y="4.6" width="13.2" height="2.4" fill="#333"/><rect x="4.10" y="8.60" width="2.2" height="1.9" fill="#e8e8e8"/><rect x="7.20" y="8.60" width="2.2" height="1.9" fill="#e8e8e8"/><rect x="10.30" y="8.60" width="2.2" height="1.9" fill="#e8e8e8"/><rect x="13.40" y="8.60" width="2.2" height="1.9" fill="#e8e8e8"/><rect x="4.10" y="11.40" width="2.2" height="1.9" fill="#e8e8e8"/><rect x="7.20" y="11.40" width="2.2" height="1.9" fill="#e8e8e8"/><rect x="10.30" y="11.40" width="2.2" height="1.9" fill="#e8e8e8"/><rect x="13.40" y="11.40" width="2.2" height="1.9" fill="#e8e8e8"/><rect x="4.10" y="14.20" width="2.2" height="1.9" fill="#e8e8e8"/><rect x="7.20" y="14.20" width="2.2" height="1.9" fill="#e8e8e8"/><rect x="10.30" y="14.20" width="2.2" height="1.9" fill="#e8e8e8"/><rect x="13.40" y="14.20" width="2.2" height="1.9" fill="#e8e8e8"/></svg>
<svg style="left:1322.0px;top:526.6px" width="20" height="20" viewBox="0 0 20 20"><rect x="2.7" y="3.5" width="14.6" height="13" fill="#fff" stroke="#111" stroke-width="1.7"/><circle cx="10" cy="7.9" r="2.3" fill="#111"/><path d="M5.6 9.2 L7.6 9.2 L8.6 11 H11.4 L12.4 9.2 L14.4 9.2 V12 Q14.4 15 11 15 H9 Q5.6 15 5.6 12 Z" fill="#111"/><rect x="9.4" y="12.3" width="1.2" height="3" fill="#fff"/></svg>
<svg style="left:1322.0px;top:558.0px" width="20" height="20" viewBox="0 0 20 20"><rect x="1.9" y="5.6" width="17" height="8.8" rx="2.8" fill="#f4f4f4" stroke="#111" stroke-width="1.6"/></svg>
<span class="t" style="left:1327px;top:557.6px;line-height:20px;color:#222;font-size:7px;font-weight:bold;letter-spacing:0.036px;">btn</span>
<svg style="left:1322.0px;top:588.6px" width="20" height="20" viewBox="0 0 20 20"><rect x="2.7" y="3" width="14.6" height="14" fill="#fff" stroke="#111" stroke-width="1.6"/><path d="M3 10.6 H17 M3 13 H17 M3 15.2 H17" stroke="#444" stroke-width="0.9"/></svg>
<span class="t" style="left:1326.6px;top:585.8px;line-height:20px;color:#222;font-size:6.5px;font-weight:bold;letter-spacing:-0.352px;">list</span>
<svg style="left:1322.0px;top:621.0px" width="20" height="20" viewBox="0 0 20 20"><path d="M5 3.3 L3 4.6 Q1.6 10 3 15.4 L5 16.7 M15 3.3 L17 4.6 Q18.4 10 17 15.4 L15 16.7" fill="none" stroke="#222" stroke-width="1.2"/><path d="M10 3.2 L15.2 6.6 L10 9.8 L4.8 6.6 Z" fill="#111"/><path d="M4.8 7.6 L9.7 10.5 V16 L4.8 13.2 Z" fill="#555"/><path d="M15.2 7.6 L10.3 10.5 V16 L15.2 13.2 Z" fill="#8c8c8c"/></svg>
<svg style="left:1322.0px;top:652.0px" width="22" height="22" viewBox="0 0 22 22"><rect x="1.7" y="1.6" width="19" height="16" rx="1" fill="#e6e6e6" stroke="#484848" stroke-width="1.2"/><rect x="3" y="3.2" width="16.6" height="2.3" fill="#cfcfcf"/><rect x="3" y="3.2" width="6" height="2.3" fill="#9a9a9a"/><path d="M2 6.8 H20.4" stroke="#8a8a8a" stroke-width="0.8"/><rect x="5.4" y="8.7" width="12.2" height="12.2" rx="2.6" fill="#dedede" stroke="#222" stroke-width="1.4"/><path d="M6.9 14.8 Q11.5 10.4 16.1 14.8 Q11.5 19 6.9 14.8 Z" fill="#f2f2f2" stroke="#111" stroke-width="1.1"/><circle cx="11.5" cy="14.7" r="1.7" fill="none" stroke="#111" stroke-width="1.1"/></svg>
<div class="b" style="left:684px;top:686px;width:13px;height:13px;background:#fff;border:1px solid #444;"></div>
<span class="t" style="left:703px;top:681.0px;line-height:20px;color:#000;font-size:12px;letter-spacing:-0.503px;">Show tab-order</span>
<div class="b" style="left:781px;top:678px;width:16px;height:30px;background:#dddddd;border:1px solid #707070;"></div>
<span class="t" style="left:783.0px;top:683.0px;line-height:20px;color:#000;font-size:12px;letter-spacing:-0.448px;">Fit</span>
<span class="t" style="left:807px;top:682.5px;line-height:20px;color:#000;font-size:12px;letter-spacing:-0.503px;">Width:</span>
<div class="b" style="left:846px;top:690.5px;width:90px;height:4px;background:#e7eaea;border:1px solid #d6d6d6;"></div>
<div class="b" style="left:848px;top:684px;width:11px;height:18px;background:#f0f0f0;border:1px solid #b0b0b0;"></div>
<span class="t" style="left:951px;top:682.5px;line-height:20px;color:#000;font-size:12px;letter-spacing:-0.433px;">Height:</span>
<div class="b" style="left:995px;top:690.5px;width:89px;height:4px;background:#e7eaea;border:1px solid #d6d6d6;"></div>
<div class="b" style="left:1005px;top:684px;width:11px;height:18px;background:#f0f0f0;border:1px solid #b0b0b0;"></div>
<span class="t" style="left:1099px;top:682.5px;line-height:20px;color:#000;font-size:12px;letter-spacing:-0.477px;">x:563 y:1384</span>
<div class="b" style="left:1166px;top:679px;width:13px;height:13px;background:#fff;border:1px solid #444;"></div>
<div class="b" style="left:1166px;top:694px;width:13px;height:13px;background:#fff;border:1px solid #444;"></div>
<span class="t" style="left:1185px;top:673.0px;line-height:20px;color:#000;font-size:12px;letter-spacing:-0.482px;">PlacingContainer/Grid Conversion</span>
<span class="t" style="left:1185px;top:688.0px;line-height:20px;color:#000;font-size:12px;letter-spacing:-0.485px;">Hide columns correctly placed</span>
<span class="t" style="left:683px;top:707.7px;line-height:20px;color:#000;font-size:8px;letter-spacing:-0.051px;">Screen size marker</span>
<div class="b" style="left:752px;top:711px;width:24px;height:12px;background:#fff;border:1px solid #c0c0c0;"></div>
<span class="t" style="left:755px;top:707.5px;line-height:20px;color:#000;font-size:8px;letter-spacing:0.051px;">1920</span>
<span class="t" style="left:776.5px;top:707.7px;line-height:20px;color:#000;font-size:8px;">X</span>
<div class="b" style="left:781px;top:711px;width:24px;height:12px;background:#fff;border:1px solid #c0c0c0;"></div>
<span class="t" style="left:784px;top:707.5px;line-height:20px;color:#000;font-size:8px;letter-spacing:0.051px;">1080</span>
<span class="t" style="left:804.8px;top:707.7px;line-height:20px;color:#000;font-size:8px;letter-spacing:-0.054px;">SuggestedZoom</span>
<div class="b" style="left:863px;top:711px;width:30px;height:12px;background:#fff;border:1px solid #c0c0c0;"></div>
<span class="t" style="left:866px;top:707.5px;line-height:20px;color:#000;font-size:8px;letter-spacing:-0.042px;">n/a</span>
<div class="b" style="left:893px;top:708px;width:79px;height:18px;background:#dddddd;border:1px solid #555;"></div>
<span class="t" style="left:895.5px;top:707.5px;line-height:20px;color:#000;font-size:8px;letter-spacing:-0.032px;">Set shrink zoom to fit</span>
</body></html>
